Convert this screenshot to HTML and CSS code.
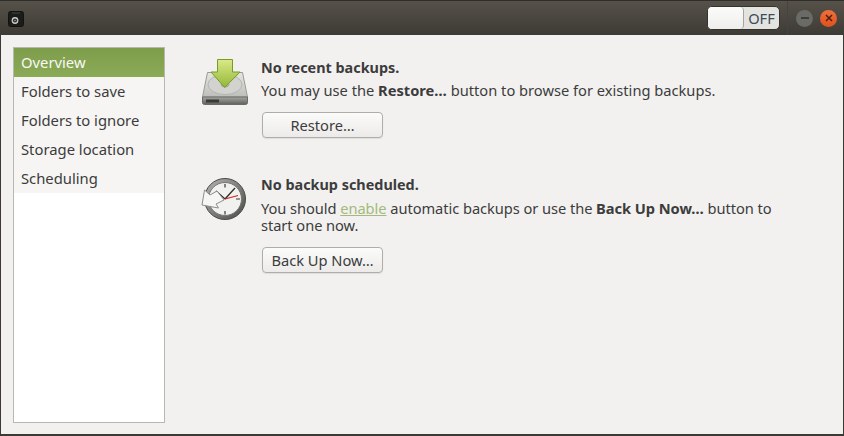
FILE: index.html
```html
<!DOCTYPE html>
<html lang="en">
<head>
    <meta charset="UTF-8">
    <title>Backups</title>
    <link rel="stylesheet" href="styles.css">
</head>
<body>
    <div class="window">
        <!-- Title bar -->
        <header class="titlebar">
            <svg class="app-icon" width="16" height="16" viewBox="0 0 16 16">
                <rect x="0.5" y="0.5" width="15" height="15" rx="2" fill="#1b1b1a" stroke="#121211"/>
                <rect x="4" y="1" width="8" height="2" fill="#30302e"/>
                <circle cx="7" cy="9.500" r="3.400" fill="#c9c9c5"/>
                <circle cx="7" cy="9.500" r="2.100" fill="#2a2a28"/>
                <circle cx="7" cy="9.500" r="0.800" fill="#a5a5a0"/>
            </svg>
            <div class="switch">
                <div class="switch-knob"></div>
                <span class="switch-label">OFF</span>
            </div>
            <div class="separator"></div>
            <div class="win-btn win-min"><svg width="10" height="10" viewBox="0 0 10 10"><path d="M1 5h8" stroke="#33332f" stroke-width="1.600"/></svg></div>
            <div class="win-btn win-close"><svg width="10" height="10" viewBox="0 0 10 10"><path d="M2 2l6 6M8 2l-6 6" stroke="#4a2110" stroke-width="1.500"/></svg></div>
        </header>

        <div class="main">
            <!-- Sidebar -->
            <nav class="sidebar">
                <ul class="nav-list">
                    <li class="nav-item selected">Overview</li>
                    <li class="nav-item">Folders to save</li>
                    <li class="nav-item">Folders to ignore</li>
                    <li class="nav-item">Storage location</li>
                    <li class="nav-item">Scheduling</li>
                </ul>
            </nav>

            <!-- Overview page -->
            <section class="content">
                <div class="block block-restore">
                    <svg class="block-icon" width="50" height="50" viewBox="0 0 50 50">
                        <defs>
                            <linearGradient id="disk" x1="0" y1="0" x2="0" y2="1">
                                <stop offset="0" stop-color="#e6e6e3"/>
                                <stop offset="1" stop-color="#bdbdba"/>
                            </linearGradient>
                            <linearGradient id="base" x1="0" y1="0" x2="0" y2="1">
                                <stop offset="0" stop-color="#a5a5a2"/>
                                <stop offset="1" stop-color="#5f5f5c"/>
                            </linearGradient>
                            <linearGradient id="arrow" x1="0" y1="0" x2="0" y2="1">
                                <stop offset="0" stop-color="#dbe987"/>
                                <stop offset="1" stop-color="#93b838"/>
                            </linearGradient>
                        </defs>
                        <path d="M7.500 15.500h35l5 24.500H2.500z" fill="url(#disk)" stroke="#9a9a97"/>
                        <ellipse cx="25" cy="27.500" rx="17" ry="10" fill="#d2d2cf" stroke="#b5b5b2"/>
                        <ellipse cx="25" cy="27.500" rx="4" ry="2.500" fill="#c2c2bf" stroke="#a8a8a5"/>
                        <path d="M2.500 40h45v5.500a2 2 0 0 1-2 2h-41a2 2 0 0 1-2-2z" fill="url(#base)" stroke="#6a6a67"/>
                        <rect x="6" y="42.500" width="13" height="3" fill="#3a3a38"/>
                        <path d="M17.500 2.500h15v12.500h7.500L24.700 30.500 11 15h6.500z" fill="url(#arrow)" stroke="#759b2a"/>
                    </svg>
                    <div class="block-text">
                        <h2 class="block-title">No recent backups.</h2>
                        <p class="block-desc">You may use the <b>Restore…</b> button to browse for existing backups.</p>
                        <button class="btn">Restore…</button>
                    </div>
                </div>

                <div class="block block-schedule">
                    <svg class="block-icon" width="50" height="50" viewBox="0 0 50 50">
                        <defs>
                            <linearGradient id="rim" x1="0" y1="0" x2="1" y2="1">
                                <stop offset="0" stop-color="#b5b5b2"/>
                                <stop offset="1" stop-color="#4a4a47"/>
                            </linearGradient>
                        </defs>
                        <circle cx="25" cy="25" r="20.500" fill="url(#rim)" stroke="#4a4a47"/>
                        <circle cx="25" cy="25" r="16.500" fill="#f1f1ef" stroke="#777774"/>
                        <path d="M25 10v3.500M25 37v3.500M40 25h-4" stroke="#3a3a38" stroke-width="1.200"/>
                        <path d="M25 25L35 14M25 25L16 17" stroke="#2e2e2c" stroke-width="1.300"/>
                        <path d="M25 25l13-3.500" stroke="#d8201c" stroke-width="1.200"/>
                        <path d="M2 31L4.500 16l5.500 5 7-4 7 9-8 4 2.500 4z" fill="#f6f6f4" stroke="#8d8d8a"/>
                    </svg>
                    <div class="block-text">
                        <h2 class="block-title">No backup scheduled.</h2>
                        <p class="block-desc">You should <a class="link" href="#">enable</a> automatic backups or use the <b>Back Up Now…</b> button to start one now.</p>
                        <button class="btn">Back Up Now…</button>
                    </div>
                </div>
            </section>
        </div>
    </div>
</body>
</html>
```

FILE: styles.css
```css
/* Basic reset */
body, h2, p, ul {
    margin: 0;
    padding: 0;
}

body {
    width: 844px;
    height: 436px;
    overflow: hidden;
    background-color: #f2f1f0;
    font-family: "Noto Sans", "Open Sans", sans-serif;
    font-size: 14.67px;
    color: #3c3c3c;
}

.window {
    display: flex;
    flex-direction: column;
    height: 436px;
    box-sizing: border-box;
    border-left: 1px solid #3a3934;
    border-right: 1px solid #3a3934;
    border-bottom: 2px solid #3a3934;
}

/* Title bar */
.titlebar {
    display: flex;
    align-items: center;
    height: 35px;
    margin: 0 -1px;
    padding: 0 7px 0 8px;
    box-sizing: border-box;
    background: linear-gradient(#56524a, #3d3b35);
    border-top: 1px solid #2f2e2a;
}

.app-icon {
    margin-top: 1px;
    margin-right: auto;
}

.switch {
    display: flex;
    align-items: center;
    width: 73px;
    height: 24px;
    box-sizing: border-box;
    background-color: #e3e3e0;
    border: 1px solid #34332e;
    border-radius: 5px;
}

.switch-knob {
    width: 35px;
    height: 22px;
    background: linear-gradient(#fbfbfa, #eeeeec);
    border-right: 1px solid #a5a5a0;
    border-radius: 4px;
}

.switch-label {
    flex: 1;
    text-align: center;
    font-size: 14.67px;
    line-height: 22px;
    color: #3f4a5a;
}

.separator {
    width: 1px;
    height: 34px;
    margin: 0 8px 0 7px;
    background-color: #46443e;
}

.win-btn {
    display: flex;
    align-items: center;
    justify-content: center;
    width: 17px;
    height: 17px;
    border-radius: 50%;
}

.win-min {
    background-color: #6a6a66;
    margin-right: 7px;
}

.win-close {
    background: linear-gradient(#f0703a, #e0501f);
}

/* Main area */
.main {
    flex: 1;
    display: flex;
    padding: 12px 12px 11px;
    min-height: 0;
}

.sidebar {
    width: 152px;
    box-sizing: border-box;
    background-color: #ffffff;
    border: 1px solid #b8b8b2;
}

.nav-list {
    list-style: none;
    background-color: #f6f5f4;
}

.nav-item {
    height: 29px;
    line-height: 29px;
    padding-left: 7px;
    font-size: 14.8px;
}

.nav-item.selected {
    background: linear-gradient(#7d9d4c, #8cab57);
    color: #f8f8f4;
}

/* Overview content */
.content {
    flex: 1;
    padding: 0 0 0 35px;
}

.block {
    display: flex;
}

.block-restore {
    padding-top: 10px;
}

.block-schedule {
    padding-top: 36px;
}

.block-icon {
    flex-shrink: 0;
    margin-right: 11px;
}

.block-text {
    width: 515px;
    padding-top: 1px;
}

.block-title {
    font-size: 14.4px;
    font-weight: 700;
    line-height: 20px;
}

.block-desc {
    margin-top: 4px;
    line-height: 17px;
}

.block-schedule .block-desc {
    margin-top: 5px;
    letter-spacing: -0.06px;
}

.link {
    color: #a3ba7c;
}

.btn {
    display: block;
    width: 121px;
    height: 26px;
    margin: 13px 0 0 1px;
    padding: 0;
    background: linear-gradient(#fbfbfa, #ecebe9);
    border: 1px solid #aeaea8;
    border-radius: 4px;
    font-family: inherit;
    font-size: 14.67px;
    color: #3c3c3c;
    box-shadow: 0 1px 1px rgba(0, 0, 0, 0.08);
}
```
